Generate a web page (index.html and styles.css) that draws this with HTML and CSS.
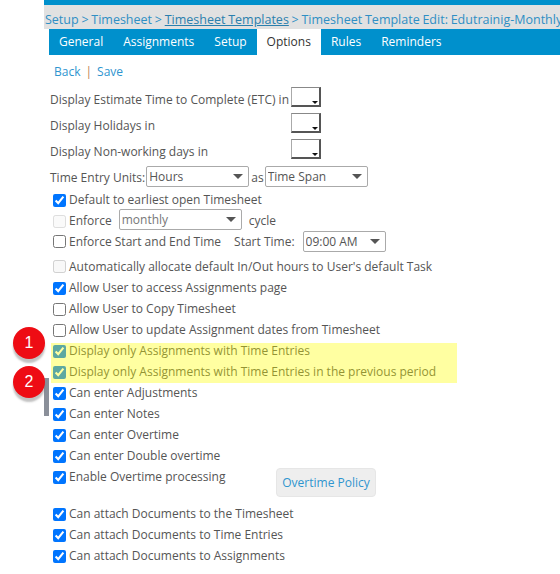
FILE: index.html
```html
<!DOCTYPE html>
<html>
<head>
    <link rel="stylesheet" href="styles.css">
    <title>Timesheet Template Edit</title>
</head>

<body>
    <div class="page">
        <div class="topbar"></div>
        <div class="crumbs">
            Setup &gt; Timesheet &gt; <a href="#">Timesheet Templates</a> &gt; Timesheet Template Edit: Edutrainig-Monthly
        </div>
        <div class="tabs">
            <span class="tab">General</span>
            <span class="tab">Assignments</span>
            <span class="tab">Setup</span>
            <span class="tab active">Options</span>
            <span class="tab">Rules</span>
            <span class="tab">Reminders</span>
        </div>

        <div class="actions">
            <span class="link">Back</span><span class="sep">|</span><span class="link">Save</span>
        </div>

        <div class="form">
            <div class="line tall"><span class="caption">Display Estimate Time to Complete (ETC) in</span><span class="oldselect"></span></div>
            <div class="line tall"><span class="caption">Display Holidays in</span><span class="oldselect"></span></div>
            <div class="line tall"><span class="caption">Display Non-working days in</span><span class="oldselect"></span></div>
            <div class="line units">
                <span>Time Entry Units:</span>
                <span class="selbox sel-hours"><select class="sel"><option>Hours</option></select></span>
                <span>as</span>
                <span class="selbox sel-span"><select class="sel"><option>Time Span</option></select></span>
            </div>

            <label class="check"><input type="checkbox" checked><span>Default to earliest open Timesheet</span></label>
            <label class="check muted"><input type="checkbox" disabled><span>Enforce</span>
                <span class="selbox sel-cycle"><select class="sel" disabled><option>monthly</option></select></span>
                <span>cycle</span>
            </label>
            <label class="check times"><input type="checkbox"><span>Enforce Start and End Time</span>
                <span class="start">Start Time:</span>
                <span class="selbox sel-time"><select class="sel"><option>09:00 AM</option></select></span>
            </label>
            <label class="check auto"><input type="checkbox" disabled><span>Automatically allocate default In/Out hours to User's default Task</span></label>
            <label class="check"><input type="checkbox" checked><span>Allow User to access Assignments page</span></label>
            <label class="check"><input type="checkbox"><span>Allow User to Copy Timesheet</span></label>
            <label class="check"><input type="checkbox"><span>Allow User to update Assignment dates from Timesheet</span></label>
            <label class="check"><input type="checkbox" checked><span>Display only Assignments with Time Entries</span></label>
            <label class="check"><input type="checkbox" checked><span>Display only Assignments with Time Entries in the previous period</span></label>
            <label class="check"><input type="checkbox" checked><span>Can enter Adjustments</span></label>
            <label class="check"><input type="checkbox" checked><span>Can enter Notes</span></label>
            <label class="check"><input type="checkbox" checked><span>Can enter Overtime</span></label>
            <label class="check"><input type="checkbox" checked><span>Can enter Double overtime</span></label>
            <div class="overtime">
                <label class="check"><input type="checkbox" checked><span>Enable Overtime processing</span></label>
                <span class="policy">Overtime Policy</span>
            </div>
            <label class="check"><input type="checkbox" checked><span>Can attach Documents to the Timesheet</span></label>
            <label class="check"><input type="checkbox" checked><span>Can attach Documents to Time Entries</span></label>
            <label class="check"><input type="checkbox" checked><span>Can attach Documents to Assignments</span></label>
        </div>
    </div>

    <!-- annotations drawn over the screenshot -->
    <div class="highlight"></div>
    <div class="scrollmark"></div>
    <div class="callout one">1</div>
    <div class="callout two">2</div>
</body>
</html>
```

FILE: styles.css
```css
html, body {
    margin: 0;
    height: 574px;
    overflow: hidden;
    background-color: #ffffff;
}
body {
    font-family: 'Open Sans', sans-serif;
    font-size: 12px;
    color: #555555;
    position: relative;
}
.page {
    margin-left: 44px;
}
.topbar {
    height: 5px;
    background-color: #0090cc;
}
.crumbs {
    height: 24px;
    line-height: 29px;
    background-color: #e1e1e1;
    color: #2f8fc4;
    font-size: 12.5px;
    word-spacing: -0.5px;
    padding-left: 1px;
    white-space: nowrap;
    overflow: hidden;
}
.crumbs a {
    color: #2a7fad;
}
.tabs {
    display: flex;
    margin-left: 5px;
    height: 26px;
    background-color: #0090cc;
}
.tab {
    padding: 0 10px;
    line-height: 26px;
    color: #ffffff;
}
.tab.active {
    background-color: #ffffff;
    color: #333333;
}
.actions {
    margin: 8px 0 0 10px;
    height: 17px;
    line-height: 17px;
}
.link {
    color: #2f95cf;
}
.sep {
    color: #c08050;
    margin: 0 5px;
}
.form {
    margin: 6px 0 0 6px;
}
.line {
    display: flex;
    align-items: center;
    white-space: nowrap;
}
.tall {
    height: 26px;
}
.caption {
    flex: 0 0 241px;
}
.oldselect {
    width: 30px;
    height: 20px;
    box-sizing: border-box;
    margin-top: -5px;
    border-top: 1px solid #888888;
    border-left: 1px solid #aaaaaa;
    border-right: 2px solid #555555;
    border-bottom: 2px solid #555555;
    position: relative;
}
.oldselect::after {
    content: "";
    position: absolute;
    right: 1px;
    bottom: 1px;
    border-left: 3px solid transparent;
    border-right: 3px solid transparent;
    border-top: 3px solid #111111;
}
.units {
    height: 24px;
    margin-top: 1px;
}
.selbox {
    display: block;
    flex: none;
    position: relative;
    height: 21px;
}
.selbox::after {
    content: "";
    position: absolute;
    right: 6px;
    top: 8px;
    border-left: 5px solid transparent;
    border-right: 5px solid transparent;
    border-top: 5px solid #555555;
    pointer-events: none;
}
.sel {
    display: block;
    appearance: none;
    box-sizing: border-box;
    width: 100%;
    height: 21px;
    padding: 0 0 0 2px;
    font-family: 'Open Sans', sans-serif;
    font-size: 12px;
    color: #555555;
    background-color: #ffffff;
    border: 1px solid #aaaaaa;
    border-radius: 2px;
}
.sel:disabled {
    opacity: 1;
    color: #777777;
}
.sel-hours {
    width: 103px;
    margin: -1px 2px 0 1px;
}
.sel-span {
    width: 103px;
    margin: -1px 0 0 1px;
}
.sel-cycle {
    width: 123px;
    margin: -2px 7px 0 7px;
}
.sel-time {
    width: 83px;
    margin-left: 8px;
    margin-top: -2px;
}
.check {
    display: flex;
    align-items: center;
    height: 21px;
    padding-left: 3px;
    white-space: nowrap;
}
.check input {
    width: 13px;
    height: 13px;
    margin: 1px 3px 0 0;
    flex: none;
}
.times {
    height: 24px;
    box-sizing: border-box;
    padding-top: 2px;
    align-items: flex-start;
}
.times input {
    margin-top: 2px;
}
.start {
    margin-left: 13px;
}
.auto {
    height: 22px;
}
.muted input {
    opacity: 0.7;
}
.overtime {
    display: flex;
    height: 37px;
}
.overtime .check {
    flex: 0 0 223px;
}
.policy {
    box-sizing: border-box;
    width: 100px;
    height: 29px;
    margin-top: 2px;
    line-height: 27px;
    text-align: center;
    background-color: #eeeeee;
    border: 1px solid #e6e6e6;
    border-radius: 4px;
    color: #2f95cf;
}
.highlight {
    position: absolute;
    left: 51px;
    top: 343px;
    width: 406px;
    height: 40px;
    background-color: rgba(255, 255, 0, 0.37);
}
.scrollmark {
    position: absolute;
    left: 44px;
    top: 378px;
    width: 5px;
    height: 38px;
    background-color: #8a8f99;
}
.callout {
    position: absolute;
    left: 13px;
    width: 32px;
    height: 32px;
    line-height: 32px;
    border-radius: 50%;
    background-color: #ee0c14;
    color: #ffffff;
    font-family: 'Liberation Sans', sans-serif;
    font-size: 16px;
    text-align: center;
    box-shadow: 0 4px 2px rgba(120, 120, 120, 0.45);
}
.one {
    top: 327px;
}
.two {
    top: 366px;
}
```
